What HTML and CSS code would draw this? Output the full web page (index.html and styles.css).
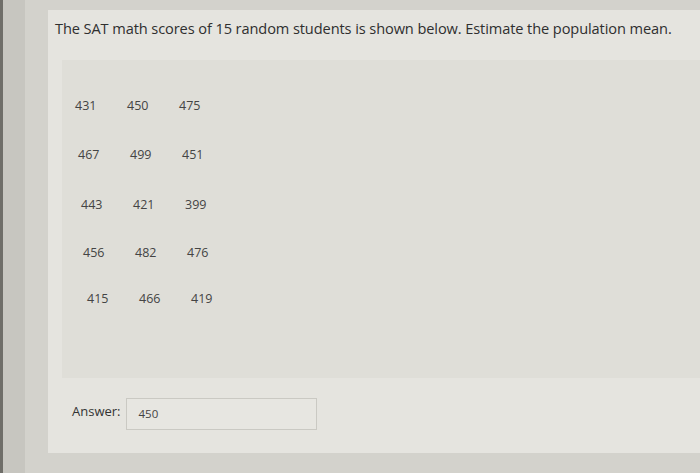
FILE: index.html
```html
<!DOCTYPE html>
<html>
<head>
<meta charset="utf-8">
<link rel="stylesheet" href="styles.css">
</head>
<body>
<div class="frame">
  <div class="card">
    <p class="question">The SAT math scores of 15 random students is shown below. Estimate the population mean.</p>
    <div class="panel">
      <div class="scores">
        <div class="row r1"><span>431</span><span>450</span><span>475</span></div>
        <div class="row r2"><span>467</span><span>499</span><span>451</span></div>
        <div class="row r3"><span>443</span><span>421</span><span>399</span></div>
        <div class="row r4"><span>456</span><span>482</span><span>476</span></div>
        <div class="row r5"><span>415</span><span>466</span><span>419</span></div>
      </div>
    </div>
    <div class="answer">
      <span class="label">Answer:</span>
      <div class="input">450</div>
    </div>
  </div>
</div>
</body>
</html>
```
FILE: styles.css
```css
html, body {
  margin: 0;
  height: 100%;
}
body {
  background: #c7c6c0;
  border-left: 3px solid #6f6e69;
  box-sizing: border-box;
  overflow: hidden;
  font-family: "Open Sans", "Liberation Sans", sans-serif;
  color: #3a3a3a;
}
.frame {
  margin-left: 22px;
  height: 100%;
  background: #d3d2cc;
  padding: 10px 0 0 23px;
  box-sizing: border-box;
}
.card {
  background: #e5e4df;
  height: 443px;
  padding: 0 0 0 7px;
  display: flex;
  flex-direction: column;
}
.question {
  margin: 8px 0 0 0;
  font-size: 14.6px;
  line-height: 20px;
  color: #2f2f2f;
  letter-spacing: -0.1px;
}
.panel {
  margin: 22px 0 0 7px;
  height: 318px;
  background: #dfded8;
}
.scores {
  padding-top: 37px;
  font-size: 12.5px;
  color: #444;
}
.row {
  display: flex;
  height: 49px;
}
.row span {
  width: 52px;
}
.r1 { padding-left: 13px; }
.r2 { padding-left: 16px; height: 50px; }
.r3 { padding-left: 19px; height: 48px; }
.r4 { padding-left: 21px; height: 46px; }
.r5 { padding-left: 25px; }
.answer {
  display: flex;
  align-items: center;
  margin: 20px 0 0 17px;
}
.label {
  font-size: 13px;
  color: #333;
  margin: 0 5px 6px 0;
}
.input {
  width: 177px;
  height: 30px;
  border: 1px solid #cac9c3;
  background: #e7e6e1;
  font-size: 11.5px;
  line-height: 30px;
  padding-left: 12px;
  color: #444;
}
```
